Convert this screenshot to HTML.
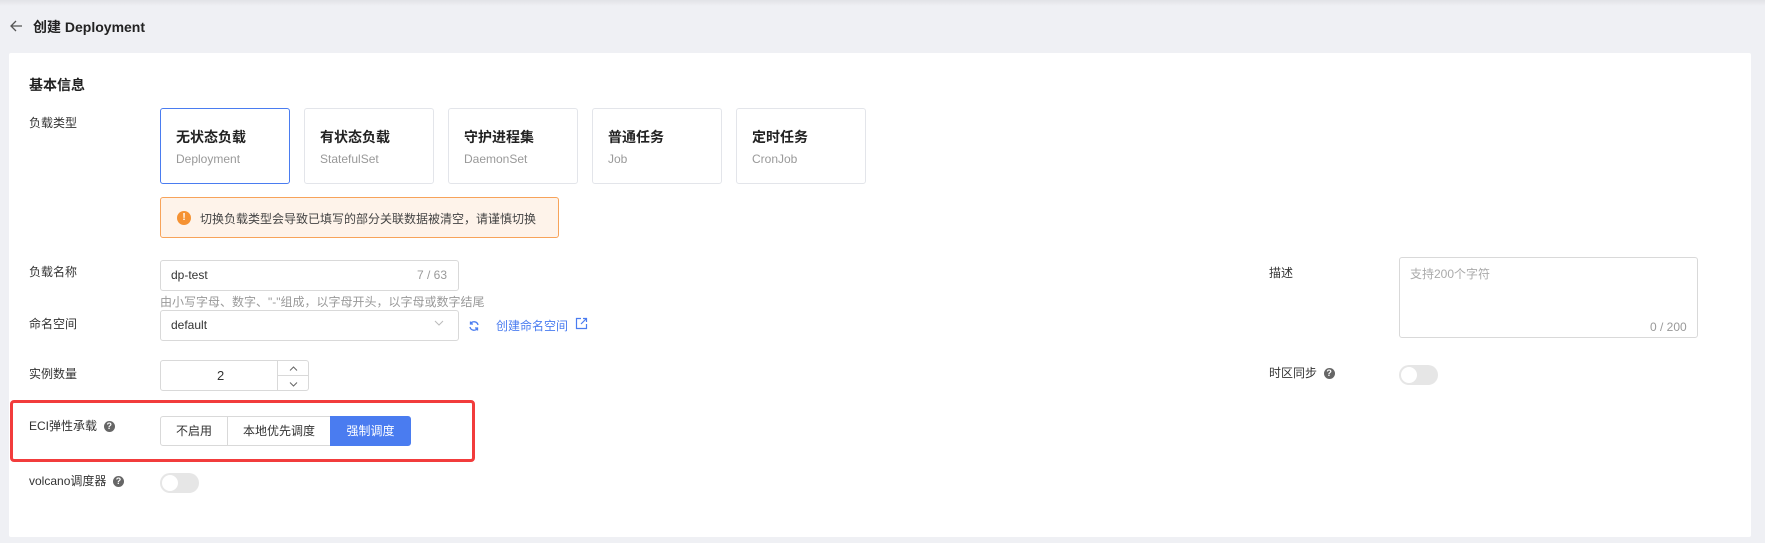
<!DOCTYPE html>
<html><head><meta charset="utf-8"><style>
*{box-sizing:border-box;margin:0;padding:0}
body{width:1765px;height:543px;background:#eff0f4;font-family:"Liberation Sans","Noto Sans CJK SC",sans-serif;color:#333;position:relative;overflow:hidden;font-size:12px}
.a{position:absolute}
.card{position:absolute;left:9px;top:53px;width:1742px;height:484px;background:#fff;border-radius:2px}
.lbl{position:absolute;left:29px;font-size:12px;color:#333;line-height:16px}
.t{position:absolute;top:108px;width:130px;height:76px;border:1px solid #e3e5ea;border-radius:3px;background:#fff}
.t b{position:absolute;left:15px;top:18px;font-size:14px;color:#222}
.t span{position:absolute;left:15px;top:43px;font-size:12px;color:#999}
.inp{position:absolute;border:1px solid #d9d9d9;border-radius:3px;background:#fff}
.q{display:inline-block;width:11px;height:11px;border-radius:50%;background:#666;color:#fff;font-size:9px;line-height:11px;text-align:center;font-weight:bold;vertical-align:1px}
.tg{position:absolute;width:39px;height:20px;border-radius:10px;background:#e6e6e6}
.tg:after{content:"";position:absolute;left:2px;top:2px;width:16px;height:16px;border-radius:50%;background:#fff}
.btn{position:absolute;top:416px;height:30px;border:1px solid #d9d9d9;font-size:12px;line-height:28px;text-align:center;color:#333;background:#fff}
</style></head><body>
<div class="a" style="left:0;top:0;width:1765px;height:6px;background:linear-gradient(#e2e3e7,#eff0f4)"></div>
<svg class="a" style="left:10px;top:20px" width="13" height="12" viewBox="0 0 13 12"><path d="M12 6H1.5M6 1L1 6l5 5" fill="none" stroke="#555" stroke-width="1.3"/></svg>
<div class="a" style="left:33px;top:17px;font-size:14px;font-weight:bold;color:#222">创建 Deployment</div>
<div class="card"></div>
<div class="a" style="left:29px;top:75px;font-size:14px;font-weight:bold;color:#222">基本信息</div>
<div class="lbl" style="top:115px">负载类型</div>
<div class="t" style="left:160px;border-color:#4a7cf0"><b>无状态负载</b><span>Deployment</span></div>
<div class="t" style="left:304px"><b>有状态负载</b><span>StatefulSet</span></div>
<div class="t" style="left:448px"><b>守护进程集</b><span>DaemonSet</span></div>
<div class="t" style="left:592px"><b>普通任务</b><span>Job</span></div>
<div class="t" style="left:736px"><b>定时任务</b><span>CronJob</span></div>
<div class="a" style="left:160px;top:197px;width:399px;height:41px;background:#fef3ea;border:1px solid #f7a35a;border-radius:3px"></div>
<div class="a" style="left:177px;top:211px;width:14px;height:14px;border-radius:50%;background:#f59233;color:#fff;font-size:10px;font-weight:bold;text-align:center;line-height:14px">!</div>
<div class="a" style="left:200px;top:210px;font-size:12px;color:#444">切换负载类型会导致已填写的部分关联数据被清空，请谨慎切换</div>

<div class="lbl" style="top:264px">负载名称</div>
<div class="inp" style="left:160px;top:260px;width:299px;height:31px"></div>
<div class="a" style="left:171px;top:268px;font-size:12px;color:#333">dp-test</div>
<div class="a" style="left:417px;top:268px;font-size:12px;color:#999">7 / 63</div>
<div class="a" style="left:160px;top:293px;font-size:12px;color:#999">由小写字母、数字、"-"组成，以字母开头，以字母或数字结尾</div>
<div class="lbl" style="top:316px">命名空间</div>
<div class="inp" style="left:160px;top:310px;width:299px;height:31px"></div>
<div class="a" style="left:171px;top:318px;font-size:12px;color:#333">default</div>
<svg class="a" style="left:434px;top:320px" width="10" height="6"><path d="M1 1l4 4 4-4" fill="none" stroke="#bbb"/></svg>
<svg class="a" style="left:468px;top:320px" width="12" height="12" viewBox="0 0 12 12"><path d="M10 5A4 4 0 0 0 2.5 4M2 7a4 4 0 0 0 7.5 1M2.5 1.5v2.5h2.5M9.5 10.5V8H7" fill="none" stroke="#4a7cf0" stroke-width="1.3"/></svg>
<div class="a" style="left:496px;top:317px;font-size:12px;color:#4a7cf0">创建命名空间</div>
<svg class="a" style="left:575px;top:317px" width="13" height="13" viewBox="0 0 13 13"><path d="M6 1.5H1.5v10h10V7M8 1.5h3.5V5M11.5 1.5L6 7" fill="none" stroke="#4a7cf0" stroke-width="1.2"/></svg>

<div class="lbl" style="top:366px">实例数量</div>
<div class="inp" style="left:160px;top:360px;width:149px;height:31px"></div>
<div class="a" style="left:277px;top:360px;width:1px;height:31px;background:#d9d9d9"></div>
<div class="a" style="left:277px;top:375px;width:32px;height:1px;background:#d9d9d9"></div>
<div class="a" style="left:217px;top:368px;font-size:13px;color:#333">2</div>
<svg class="a" style="left:289px;top:366px" width="9" height="5"><path d="M1 4.5l3.5-3.5 3.5 3.5" fill="none" stroke="#666"/></svg>
<svg class="a" style="left:289px;top:382px" width="9" height="5"><path d="M1 .5l3.5 3.5 3.5-3.5" fill="none" stroke="#666"/></svg>

<div class="a" style="left:10px;top:400px;width:465px;height:62px;border:3px solid #f23c3c;border-radius:4px"></div>
<div class="lbl" style="top:418px">ECI弹性承载 &nbsp;<span class="q">?</span></div>
<div class="btn" style="left:160px;width:68px;border-radius:3px 0 0 3px">不启用</div>
<div class="btn" style="left:227px;width:104px;border-left:1px solid #d9d9d9">本地优先调度</div>
<div class="btn" style="left:330px;width:81px;background:#4a7cf0;border-color:#4a7cf0;color:#fff;border-radius:0 3px 3px 0">强制调度</div>

<div class="lbl" style="top:473px">volcano调度器 &nbsp;<span class="q">?</span></div>
<div class="tg" style="left:160px;top:473px"></div>

<div class="lbl" style="left:1269px;top:265px">描述</div>
<div class="inp" style="left:1399px;top:257px;width:299px;height:81px"></div>
<div class="a" style="left:1410px;top:265px;font-size:12px;color:#aaa">支持200个字符</div>
<div class="a" style="left:1650px;top:320px;font-size:12px;color:#999">0 / 200</div>
<div class="lbl" style="left:1269px;top:365px">时区同步 &nbsp;<span class="q">?</span></div>
<div class="tg" style="left:1399px;top:365px"></div>
</body></html>
